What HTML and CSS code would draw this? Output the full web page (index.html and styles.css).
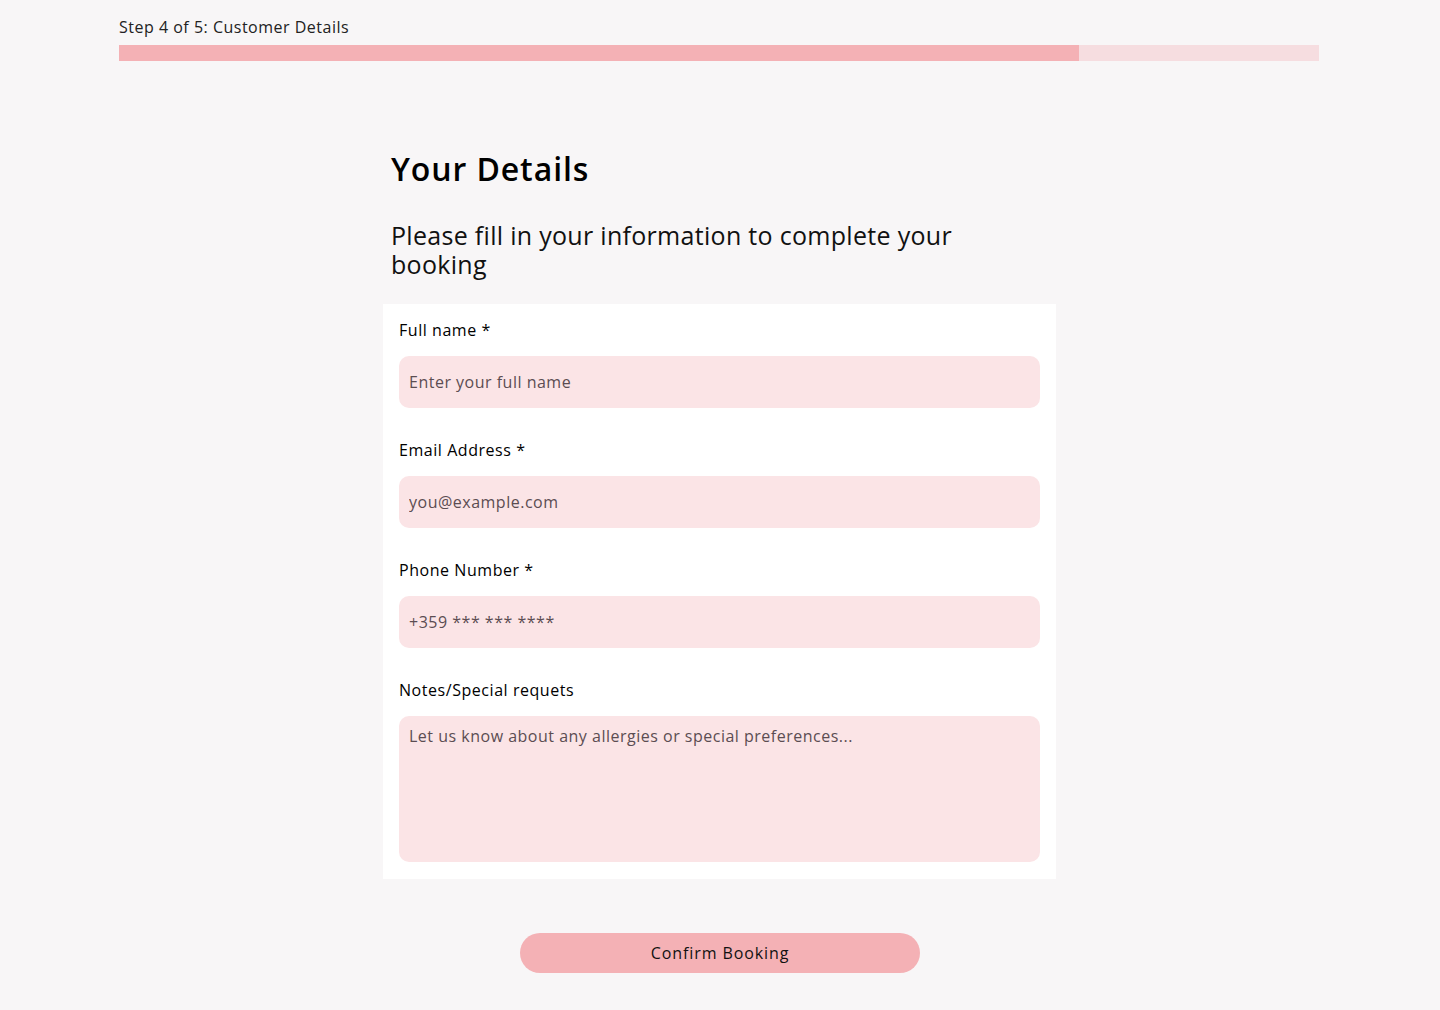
FILE: index.html
```html
<!DOCTYPE html>
<html lang="en">
<head>
<meta charset="utf-8">
<title>Customer Details</title>
<link rel="stylesheet" href="styles.css">
</head>
<body>
<header class="progress">
  <div class="progress-label">Step 4 of 5: Customer Details</div>
  <div class="progress-track"><div class="progress-fill" style="width: 80%"></div></div>
</header>
<main class="content">
  <div class="intro">
    <h1 class="title">Your Details</h1>
    <p class="subtitle">Please fill in your information to complete your booking</p>
  </div>
  <form class="card">
    <div class="field">
      <label class="label" for="name">Full name *</label>
      <input class="input" id="name" type="text" placeholder="Enter your full name">
    </div>
    <div class="field">
      <label class="label" for="email">Email Address *</label>
      <input class="input" id="email" type="email" placeholder="you@example.com">
    </div>
    <div class="field">
      <label class="label" for="phone">Phone Number *</label>
      <input class="input" id="phone" type="tel" placeholder="+359 *** *** ****">
    </div>
    <div class="field">
      <label class="label" for="notes">Notes/Special requets</label>
      <textarea class="input textarea" id="notes" placeholder="Let us know about any allergies or special preferences..."></textarea>
    </div>
  </form>
  <button class="confirm" type="button">Confirm Booking</button>
</main>
</body>
</html>
```
FILE: styles.css
```css
* { box-sizing: border-box; }
html, body { margin: 0; padding: 0; }
body {
  background: #f8f6f7;
  font-family: "Open Sans", "DejaVu Sans", sans-serif;
  color: #111;
  height: 1010px;
}
.progress {
  width: 1200px;
  margin: 0 auto;
  padding-top: 17px;
  transform: translateX(-1px);
}
.progress-label {
  font-size: 16px;
  line-height: 20px;
  letter-spacing: 0.5px;
  color: #222;
}
.progress-track {
  margin-top: 8px;
  height: 16px;
  background: #f6dde0;
}
.progress-fill {
  height: 100%;
  background: #f4b1b5;
}
.content {
  width: 674px;
  margin: 0 auto;
  display: flex;
  flex-direction: column;
  align-items: center;
  padding-top: 88px;
}
.intro {
  width: 100%;
  padding: 0 8px;
}
.title {
  margin: 0;
  font-size: 32px;
  line-height: 40px;
  font-weight: 600;
  letter-spacing: 0.9px;
  color: #000;
}
.subtitle {
  margin: 32px 0 0;
  font-size: 25px;
  line-height: 29px;
  font-weight: 400;
  letter-spacing: 0.3px;
  color: #111;
  max-width: 600px;
}
.card {
  width: 673px;
  align-self: flex-start;
  margin-top: 25px;
  background: #fff;
  padding: 16px 16px 17px;
  display: flex;
  flex-direction: column;
  gap: 32px;
}
.field {
  display: flex;
  flex-direction: column;
  gap: 16px;
}
.label {
  font-size: 16px;
  line-height: 20px;
  font-weight: 500;
  letter-spacing: 0.55px;
  color: #000;
}
.input {
  display: block;
  width: 100%;
  height: 52px;
  border: none;
  border-radius: 10px;
  background: #fbe4e6;
  padding: 0 10px;
  font-family: inherit;
  font-size: 16px;
  letter-spacing: 0.5px;
  color: #222;
  outline: none;
}
.input::placeholder { color: #5b4d52; opacity: 1; }
.textarea {
  height: 146px;
  padding: 10px;
  resize: none;
  line-height: 20px;
}
.confirm {
  margin-top: 54px;
  width: 400px;
  height: 40px;
  border: none;
  border-radius: 20px;
  background: #f4b1b5;
  font-family: inherit;
  font-size: 16px;
  font-weight: 500;
  letter-spacing: 0.9px;
  color: #111;
  cursor: pointer;
}
```
